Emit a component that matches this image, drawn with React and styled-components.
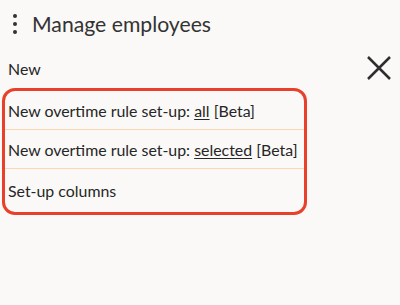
import React from 'react'
import styled, { createGlobalStyle } from 'styled-components'

const GlobalStyle = createGlobalStyle`
  html, body {
    margin: 0;
    padding: 0;
    background: #faf9f7;
  }
  body {
    font-family: Lato, "Open Sans", sans-serif;
    color: #262626;
  }
`

const Page = styled.div`
  width: 400px;
  height: 305px;
  box-sizing: border-box;
  padding: 8px 0 0 8px;
`

const Header = styled.div`
  display: flex;
  align-items: center;
  gap: 15px;
  height: 32px;
`

const Dots = styled.div`
  display: flex;
  flex-direction: column;
  gap: 4px;
  padding-left: 5px;

  span {
    width: 4px;
    height: 4px;
    border-radius: 50%;
    background: #333;
  }
`

const Title = styled.h1`
  margin: 0;
  font-size: 21.2px;
  font-weight: 400;
  color: #333;
`

const SubRow = styled.div`
  display: flex;
  align-items: center;
  justify-content: space-between;
  margin-top: 16px;
  padding-right: 9px;
`

const SubTitle = styled.div`
  font-size: 15.9px;
`

const CloseButton = styled.button`
  border: none;
  background: none;
  padding: 0;
  width: 24px;
  height: 24px;
  display: flex;
  cursor: pointer;
`

const Menu = styled.ul`
  list-style: none;
  margin: 8px 0 0 -6px;
  padding: 0;
  width: 305px;
  box-sizing: border-box;
  border: 3px solid #e8402a;
  border-radius: 13px;
  overflow: hidden;
`

const MenuItem = styled.li`
  display: flex;
  align-items: center;
  height: ${p => p.last ? 43 : 38}px;
  padding-left: 3px;
  font-size: 15.9px;
  border-bottom: ${p => p.last ? 'none' : '1px solid #fbd7b0'};

  u {
    text-underline-offset: 2px;
  }
`

export default function App () {
  return (
    <Page>
      <GlobalStyle />
      <Header>
        <Dots><span /><span /><span /></Dots>
        <Title>Manage employees</Title>
      </Header>
      <SubRow>
        <SubTitle>New</SubTitle>
        <CloseButton aria-label='Close'>
          <svg width='24' height='24' viewBox='0 0 24 24'>
            <path d='M1 1L23 23M23 1L1 23' stroke='#2e2e2e' strokeWidth='2.5' />
          </svg>
        </CloseButton>
      </SubRow>
      <Menu>
        <MenuItem>New overtime rule set-up:&nbsp;<u>all</u>&nbsp;[Beta]</MenuItem>
        <MenuItem>New overtime rule set-up:&nbsp;<u>selected</u>&nbsp;[Beta]</MenuItem>
        <MenuItem last>Set-up columns</MenuItem>
      </Menu>
    </Page>
  )
}
